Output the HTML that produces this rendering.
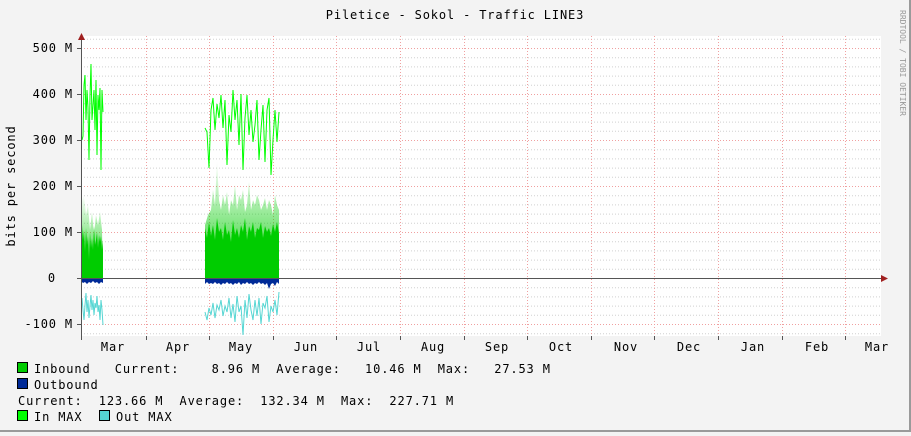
<!DOCTYPE html>
<html><head><meta charset="utf-8"><style>
html,body{margin:0;padding:0;background:#f3f3f3;}
body{width:911px;height:432px;overflow:hidden;position:relative;font-family:"DejaVu Sans Mono","Liberation Mono",monospace;}
svg text{font-family:"DejaVu Sans Mono","Liberation Mono",monospace;}
</style></head><body>
<svg width="911" height="432" viewBox="0 0 911 432" xmlns="http://www.w3.org/2000/svg">
<defs>
<linearGradient id="fade" x1="0" y1="0" x2="0" y2="1"><stop offset="0" stop-color="#00cc00" stop-opacity="0"/><stop offset="1" stop-color="#00cc00" stop-opacity="0.9"/></linearGradient>
</defs>
<rect x="0" y="0" width="911" height="432" fill="#f3f3f3"/>
<rect x="909" y="0" width="2" height="432" fill="#9a9a9a"/>
<rect x="0" y="430" width="911" height="2" fill="#9a9a9a"/>
<rect x="81" y="36" width="800" height="300" fill="#ffffff"/>
<g stroke="#d0d0d0" stroke-width="1" stroke-dasharray="1,2">
<path d="M81 269.3H881M81 260.1H881M81 250.9H881M81 241.7H881M81 223.3H881M81 214.1H881M81 204.9H881M81 195.7H881M81 177.3H881M81 168.1H881M81 158.9H881M81 149.7H881M81 131.3H881M81 122.1H881M81 112.9H881M81 103.7H881M81 85.3H881M81 76.1H881M81 66.9H881M81 57.7H881M81 39.3H881M81 287.7H881M81 296.9H881M81 306.1H881M81 315.3H881M81 333.7H881"/>
</g>
<g stroke="#f0a0a0" stroke-width="1" stroke-dasharray="1,2">
<path d="M81 278.5H881M81 232.5H881M81 186.5H881M81 140.5H881M81 94.5H881M81 48.5H881M81 324.5H881"/>
<path d="M146.5 36V336M209.5 36V336M273.5 36V336M336.5 36V336M400.5 36V336M464.5 36V336M527.5 36V336M591.5 36V336M654.5 36V336M718.5 36V336M782.5 36V336M845.5 36V336"/>
</g>
<polygon fill="url(#fade)" points="82,278 82,200 84,195 86,215 88,205 90,230 92,212 94,235 96,215 98,225 100,212 102,230 103,278"/>
<polygon fill="#00cc00" points="82,278 82,225 83,240 84,230 85,252 86,228 87,245 88,236 89,260 90,232 91,248 92,238 93,250 94,226 95,245 96,240 97,232 98,248 99,235 100,242 101,236 102,250 103,240 103,278"/>
<polygon fill="url(#fade)" points="205,278 205,225 208,215 211,210 213,190 215,205 217,160 219,200 221,210 223,195 225,205 227,192 229,215 231,200 233,205 235,185 237,210 239,195 241,200 243,190 245,212 247,205 249,182 251,210 253,200 255,205 257,195 259,200 261,210 263,205 265,198 267,210 269,200 271,205 273,215 275,195 277,205 279,210 279,278"/>
<polygon fill="#00cc00" points="205,278 205,228 207,238 209,222 211,236 213,225 215,240 217,218 219,232 221,228 223,240 225,222 227,235 229,230 231,242 233,220 235,235 237,228 239,238 241,225 243,232 245,218 247,240 249,226 251,232 253,222 255,238 257,228 259,230 261,222 263,238 265,226 267,232 269,228 271,236 273,224 275,232 277,222 279,234 279,278"/>
<polygon fill="#002a97" points="82,278 103,278 103,283 101,282 99,284 97,282 95,283 93,281 91,283 89,282 87,284 85,282 83,283 82,282"/>
<polygon fill="#002a97" points="205,278 279,278 279,284 277,282 275,286 273,283 271,284 269,289 267,283 265,285 263,283 261,284 259,282 257,284 255,283 253,285 251,283 249,284 247,282 245,284 243,283 241,285 239,282 237,284 235,283 233,285 231,283 229,284 227,282 225,284 223,283 221,285 219,283 217,284 215,282 213,284 211,283 209,284 207,282 205,284"/>
<polyline fill="none" stroke="#00ff00" stroke-width="1" points="82,140 83,136 84,85 85,75 86,120 87,90 88,108 89,160 90,96 91,64 92,120 93,105 94,90 95,130 96,80 97,155 98,95 99,110 100,88 101,170 102,90 103,112"/>
<polyline fill="none" stroke="#00ff00" stroke-width="1" points="205,128 207,132 209,168 211,110 213,98 215,130 217,104 219,118 221,95 223,128 225,100 227,165 229,115 231,132 233,90 235,120 237,100 239,145 241,94 243,170 245,118 247,95 249,135 251,110 253,142 255,125 257,100 259,160 261,130 263,105 265,162 267,110 269,98 271,175 273,140 275,110 277,142 279,112"/>
<polyline fill="none" stroke="#55d6d3" stroke-width="1" points="82,298 83,310 84,320 85,305 86,293 87,312 88,300 89,318 90,306 91,295 92,310 93,300 94,315 95,303 96,308 97,296 98,312 99,305 100,320 101,300 102,310 103,325"/>
<polyline fill="none" stroke="#55d6d3" stroke-width="1" points="205,312 207,320 209,308 211,315 213,303 215,318 217,305 219,310 221,300 223,316 225,306 227,312 229,298 231,318 233,304 235,322 237,296 239,312 241,306 243,335 245,300 247,318 249,294 251,310 253,320 255,300 257,316 259,298 261,324 263,303 265,308 267,296 269,322 271,306 273,312 275,300 277,315 279,292"/>
<path d="M81.5 36V340M77 278.5H884" stroke="#555" stroke-width="1"/>
<polygon points="78,40 81.5,33 85,40" fill="#a02020"/>
<polygon points="881,275 888,278.5 881,282" fill="#a02020"/>
<path d="M77 324.5H81M77 232.5H81M77 186.5H81M77 140.5H81M77 94.5H81M77 48.5H81M146.5 336V340M209.5 336V340M273.5 336V340M336.5 336V340M400.5 336V340M464.5 336V340M527.5 336V340M591.5 336V340M654.5 336V340M718.5 336V340M782.5 336V340M845.5 336V340" stroke="#555"/>
<g font-size="12" fill="#000" letter-spacing="0.85">
<text x="455" y="19" text-anchor="middle">Piletice - Sokol  - Traffic LINE3</text>
<text x="73" y="52" text-anchor="end">500 M</text>
<text x="73" y="98" text-anchor="end">400 M</text>
<text x="73" y="144" text-anchor="end">300 M</text>
<text x="73" y="190" text-anchor="end">200 M</text>
<text x="73" y="236" text-anchor="end">100 M</text>
<text x="56" y="282" text-anchor="end">0</text>
<text x="73" y="328" text-anchor="end">-100 M</text>
<text transform="translate(15,186) rotate(-90)" text-anchor="middle">bits per second</text>
<text x="113" y="351" text-anchor="middle">Mar</text>
<text x="178" y="351" text-anchor="middle">Apr</text>
<text x="241" y="351" text-anchor="middle">May</text>
<text x="306" y="351" text-anchor="middle">Jun</text>
<text x="369" y="351" text-anchor="middle">Jul</text>
<text x="433" y="351" text-anchor="middle">Aug</text>
<text x="497" y="351" text-anchor="middle">Sep</text>
<text x="561" y="351" text-anchor="middle">Oct</text>
<text x="626" y="351" text-anchor="middle">Nov</text>
<text x="689" y="351" text-anchor="middle">Dec</text>
<text x="753" y="351" text-anchor="middle">Jan</text>
<text x="817" y="351" text-anchor="middle">Feb</text>
<text x="877" y="351" text-anchor="middle">Mar</text>
<text x="34" y="373" xml:space="preserve">Inbound   Current:    8.96 M  Average:   10.46 M  Max:   27.53 M</text>
<text x="34" y="389">Outbound</text>
<text x="18" y="405" xml:space="preserve">Current:  123.66 M  Average:  132.34 M  Max:  227.71 M</text>
<text x="34" y="421" xml:space="preserve">In MAX</text>
<text x="116" y="421" xml:space="preserve">Out MAX</text>
</g>
<g stroke="#000" stroke-width="1">
<rect x="17.5" y="362.5" width="10" height="10" fill="#00cc00"/>
<rect x="17.5" y="378.5" width="10" height="10" fill="#002a97"/>
<rect x="17.5" y="410.5" width="10" height="10" fill="#00ff00"/>
<rect x="99.5" y="410.5" width="10" height="10" fill="#55d6d3"/>
</g>
<text transform="translate(900,10) rotate(90)" font-size="8" fill="#999">RRDTOOL / TOBI OETIKER</text>
</svg>
</body></html>
